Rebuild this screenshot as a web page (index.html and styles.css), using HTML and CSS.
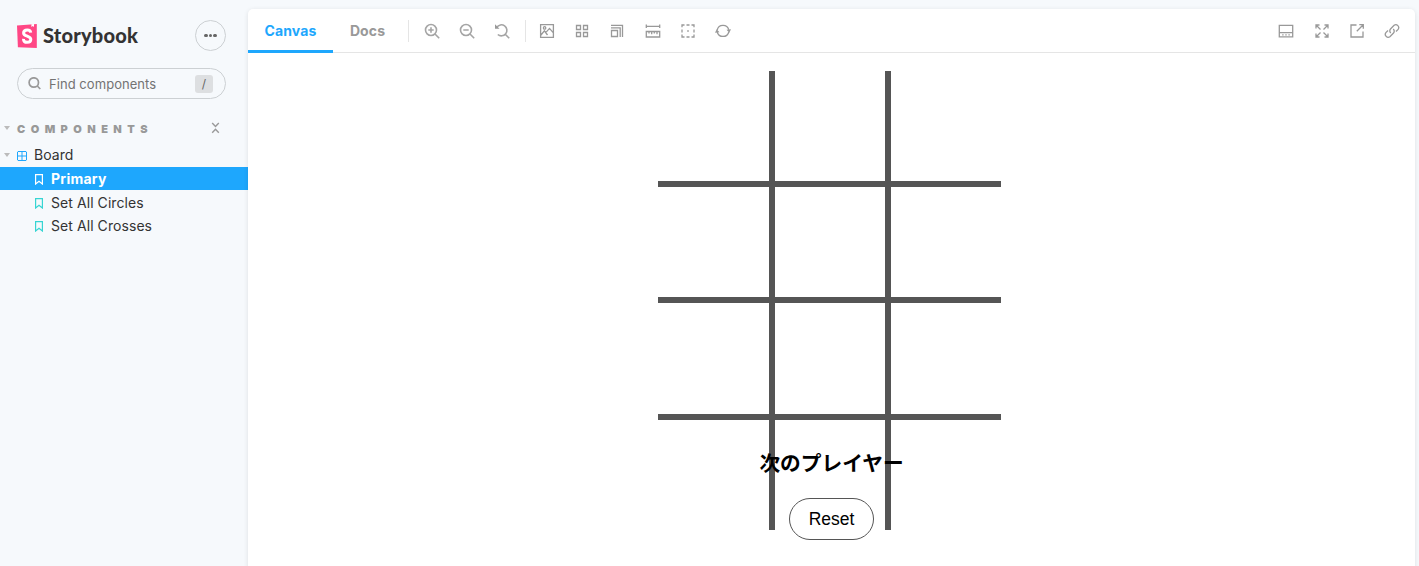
FILE: index.html
```html
<!DOCTYPE html>
<html lang="en">
<head>
<meta charset="utf-8">
<title>Board - Primary · Storybook</title>
<link rel="stylesheet" href="styles.css">
</head>
<body>
<div class="app">
  <aside class="sidebar">
    <header class="brand">
      <svg class="brand-mark" viewBox="0 0 20 24"><path d="M0 1.400 19.800 0v24L.9 23.200z" fill="#ff4785"/><path d="m14.400.3 2.600-.2v3l-1.200-1-1.400 1z" fill="#fff"/><path d="M13.700 8.600C13.500 6.500 12.300 5.900 10.300 5.900 7.900 5.900 6.600 7 6.600 8.900c0 3.800 7.200 2.700 7.200 6.400 0 2-1.300 3-3.600 3-2.500 0-3.800-1-3.700-3.400" fill="none" stroke="#fff" stroke-width="3"/></svg>
      <span class="brand-name">Storybook</span>
      <button class="menu-button" aria-label="Menu"><i></i><i></i><i></i></button>
    </header>
    <div class="search">
      <svg class="search-icon" viewBox="0 0 14 14"><circle cx="5.800" cy="5.500" r="4.700"/><path d="m9.300 9 3 3"/></svg>
      <span class="search-label">Find components</span>
      <kbd>/</kbd>
    </div>
    <div class="section">
      <i class="caret"></i>
      <span class="section-title">COMPONENTS</span>
      <svg class="collapse" viewBox="0 0 9 12"><path d="m1.200 1 3.300 3.500L7.800 1M1.200 10.800l3.300-3.500 3.300 3.500"/></svg>
    </div>
    <nav class="tree">
      <div class="row parent"><i class="caret"></i><svg class="component" viewBox="0 0 10 10"><path d="M1 .5h8l.5.500v8l-.5.500H1L.5 9V1zM5 .5v9M.5 5h9"/></svg><span>Board</span></div>
      <div class="row story selected"><svg viewBox="0 0 8 11"><path d="M.6.600h6.800v9.400L4 7.200.6 10z"/></svg><span>Primary</span></div>
      <div class="row story"><svg viewBox="0 0 8 11"><path d="M.6.600h6.800v9.400L4 7.200.6 10z"/></svg><span>Set All Circles</span></div>
      <div class="row story"><svg viewBox="0 0 8 11"><path d="M.6.600h6.800v9.400L4 7.200.6 10z"/></svg><span>Set All Crosses</span></div>
    </nav>
  </aside>
  <main class="panel">
    <div class="toolbar">
      <div class="tab active"><span>Canvas</span></div>
      <div class="tab docs"><span>Docs</span></div>
      <i class="divider"></i>
      <div class="tools zoom-tools">
        <svg viewBox="0 0 16 16"><circle cx="7" cy="7" r="5.500"/><path d="m11 11 4.200 4.200M4.300 7h5.400M7 4.300v5.400"/></svg>
        <svg viewBox="0 0 16 16"><circle cx="7" cy="7" r="5.500"/><path d="m11 11 4.200 4.200M4.300 7h5.400"/></svg>
        <svg viewBox="0 0 16 16"><path d="M2.800 4.300A5.500 5.500 0 1 1 3.800 11.500M11 11l4.200 4.200"/><path d="M1 1.300v4.500h4.500z" class="solid"/></svg>
      </div>
      <i class="divider"></i>
      <div class="tools view-tools">
        <svg viewBox="0 0 16 16"><path d="M1.600 1.600h12.800v12.800H1.600zM2 12l3.400-4.200L8.500 12M6.700 9.600l3.800-4.200 3.700 4.200"/><circle cx="5.600" cy="4.900" r="1.200"/></svg>
        <svg viewBox="0 0 16 16"><path d="M2.500 2.500h4v4h-4zM9.500 2.500h4v4h-4zM2.500 9.500h4v4h-4zM9.500 9.500h4v4h-4z"/></svg>
        <svg viewBox="0 0 16 16"><path d="M2.500 7.500h6v6h-6zM2 4.800h9.200V14M2 2.300h11.500V14"/></svg>
        <svg viewBox="0 0 16 16"><path d="M1.300 8.500h13.400v5.500H1.300zM1.300 3.300h13.400M1.300 1.500v3.600M14.700 1.500v3.600M4 8.500v2M6.700 8.500v2.800M9.300 8.500v2M12 8.500v2.800"/></svg>
        <svg viewBox="0 0 16 16"><path d="M2 4.300V2h2.500M6.500 2h3M11.500 2H14v2.300M14 6.500v3M14 11.500V14h-2.500M9.500 14h-3M4.500 14H2v-2.500M2 9.500v-3M7.200 8h1.600"/></svg>
        <svg viewBox="0 0 16 16"><path d="M2.200 7A6 6 0 0 1 13.800 6.700M13.800 9A6 6 0 0 1 2.200 9"/><path d="m11.500 6.800 4.500-.5-1.700 3.500zM4.500 9.200 0 9.700 1.700 6.200z" class="solid"/></svg>
      </div>
      <div class="tools frame-tools">
        <svg viewBox="0 0 16 16"><path d="M1.300 2.300h13.400v11.500H1.300zM1.300 9.700h13.400M4.200 11.800h1.400M7.300 11.800h1.400M10.400 11.800h1.400"/></svg>
        <svg viewBox="0 0 16 16"><path d="M2 5.500V2h3.500M2 2l4.500 4.500M10.500 2H14v3.500M14 2 9.500 6.500M2 10.500V14h3.500M2 14l4.500-4.500M10.500 14H14v-3.500M14 14 9.500 9.500"/></svg>
        <svg viewBox="0 0 16 16"><path d="M7.500 2H2v12h12V8.500M10.300 1.700h4v4M14 2 7.800 8.200"/></svg>
        <svg viewBox="0 0 16 16"><path d="M6.800 10.100a2.900 2.900 0 0 1-.3-4.100L10.100 2.300a2.900 2.900 0 0 1 4 4.100L12 8.500M9.200 5.900a2.900 2.900 0 0 1 .3 4.100L5.900 13.700a2.900 2.900 0 0 1-4-4.100L4 7.500"/></svg>
      </div>
    </div>
    <section class="canvas">
      <div class="board">
        <i></i><i></i><i></i><i></i><i></i><i></i><i></i><i></i><i></i><i></i><i></i><i></i>
        <div class="status">
          <h1>次のプレイヤー</h1>
          <button class="reset">Reset</button>
        </div>
      </div>
    </section>
  </main>
</div>
</body>
</html>
```
FILE: styles.css
```css
* { box-sizing: border-box; }
body { margin: 0; overflow: hidden; background: #f6f9fc; font-family: Inter, "Liberation Sans", sans-serif; color: #333; }
svg { display: block; flex: none; fill: none; }
button { padding: 0; font: inherit; }
.app { display: flex; height: 566px; }
.sidebar { width: 248px; flex: none; padding-top: 20px; }
.brand { display: flex; align-items: center; height: 31px; padding: 0 22px 0 17px; }
.brand-mark { width: 20px; height: 24px; }
.brand-name { margin-left: 6px; padding-bottom: 1px; font: 900 20px/29px Lato, sans-serif; letter-spacing: .2px; color: #333; white-space: nowrap; }
.menu-button { display: flex; align-items: center; justify-content: center; gap: 1px; width: 31px; height: 31px; margin-left: auto; border: 1px solid #ccd0d3; border-radius: 50%; background: transparent; }
.menu-button i { width: 3.700px; height: 3.700px; border-radius: 50%; background: #666; }
.search { display: flex; align-items: center; width: 209px; height: 31px; margin: 17px 0 0 17px; padding: 0 12px 0 10px; border: 1px solid #ccd0d3; border-radius: 16px; }
.search-icon { width: 14px; height: 14px; stroke: #999; stroke-width: 1.700; }
.search-label { margin-left: 7px; font-size: 13px; letter-spacing: .05px; color: #737373; white-space: nowrap; }
kbd { width: 18px; height: 18px; margin-left: auto; border-radius: 3px; background: #dddfe1; font: 12px/18px Inter, sans-serif; text-align: center; color: #666; }
.caret { width: 0; border: 3.5px solid transparent; border-top: 4px solid #bbb; border-bottom: 0; flex: none; }
.section { display: flex; align-items: center; height: 20px; margin-top: 19px; padding: 0 28px 0 4px; }
.section-title { margin-left: 7px; padding-top: 1px; font-size: 11px; font-weight: 900; letter-spacing: 5.450px; color: #999; }
.collapse { width: 9px; height: 12px; margin-left: auto; stroke: #999; stroke-width: 1.400; }
.tree { padding-top: 5px; font-size: 14px; letter-spacing: .07px; }
.row { display: flex; align-items: center; height: 23.500px; white-space: nowrap; }
.parent { padding-left: 4px; }
.component { width: 10px; height: 10px; margin: 2px 7px 0 7px; stroke: #1ea7fd; }
.story { padding-left: 35px; }
.story svg { width: 8px; height: 11px; margin: 3px 8px 0 0; stroke: #37d5d3; stroke-width: 1.200; }
.selected { background: #1ea7fd; color: #fff; font-weight: 700; letter-spacing: .25px; }
.selected svg { stroke: #fff; }
.selected + .story { padding-top: 1px; }
.panel { width: 1167px; height: 567px; margin-top: 9px; border-radius: 5px 5px 0 0; background: #fff; box-shadow: 0 1px 5px rgba(0,0,0,.1); }
.toolbar { display: flex; align-items: center; height: 44px; border-bottom: 1px solid #e5e5e5; font-size: 14px; font-weight: 700; letter-spacing: .1px; color: #999; }
.tab { display: flex; align-items: center; justify-content: center; height: 44px; }
.active { width: 85px; color: #1ea7fd; border-top: 3px solid transparent; border-bottom: 3px solid #1ea7fd; }
.docs { width: 69px; }
.divider { width: 1px; height: 22px; background: #e5e5e5; }
.docs + .divider { margin-left: 6px; }
.tools { display: flex; gap: 19.200px; }
.tools svg { width: 16px; height: 16px; stroke: #999; stroke-width: 1.300; }
.tools .solid { fill: #999; stroke: none; }
.zoom-tools { padding: 0 14.600px; }
.zoom-tools svg { stroke: #a5a5a5; stroke-width: 1.600; }
.view-tools { padding-left: 13.500px; }
.frame-tools { margin-left: auto; padding-right: 15px; }
.canvas { display: flex; padding: 18px 0 0 410px; }
.board { display: grid; grid-template: 110px 110px 111px 110px / 111px 110px 110px; gap: 6px; width: 343px; height: 459px; background: #555; }
.board > i { background: #fff; }
.board > i:nth-child(1) { grid-area: 1 / 1; }
.board > i:nth-child(2) { grid-area: 1 / 2; }
.board > i:nth-child(3) { grid-area: 1 / 3; }
.board > i:nth-child(4) { grid-area: 2 / 1; }
.board > i:nth-child(5) { grid-area: 2 / 2; }
.board > i:nth-child(6) { grid-area: 2 / 3; }
.board > i:nth-child(7) { grid-area: 3 / 1; }
.board > i:nth-child(8) { grid-area: 3 / 2; }
.board > i:nth-child(9) { grid-area: 3 / 3; }
.board > i:nth-child(10) { grid-area: 4 / 1; }
.board > i:nth-child(11) { grid-area: 4 / 2; }
.board > i:nth-child(12) { grid-area: 4 / 3; }
.status { grid-area: 4 / 1 / 5 / 4; display: flex; flex-direction: column; align-items: center; padding: 27px 0 0 4px; }
.status h1 { margin: 0; font: 700 20.700px/30px "Noto Sans CJK JP", sans-serif; color: #000; white-space: nowrap; }
.reset { flex: none; width: 85px; height: 42px; margin-top: 21px; border: 1px solid #555; border-radius: 21px; background: #fff; font: 17.500px "Liberation Sans", Arial, sans-serif; color: #000; }
```
